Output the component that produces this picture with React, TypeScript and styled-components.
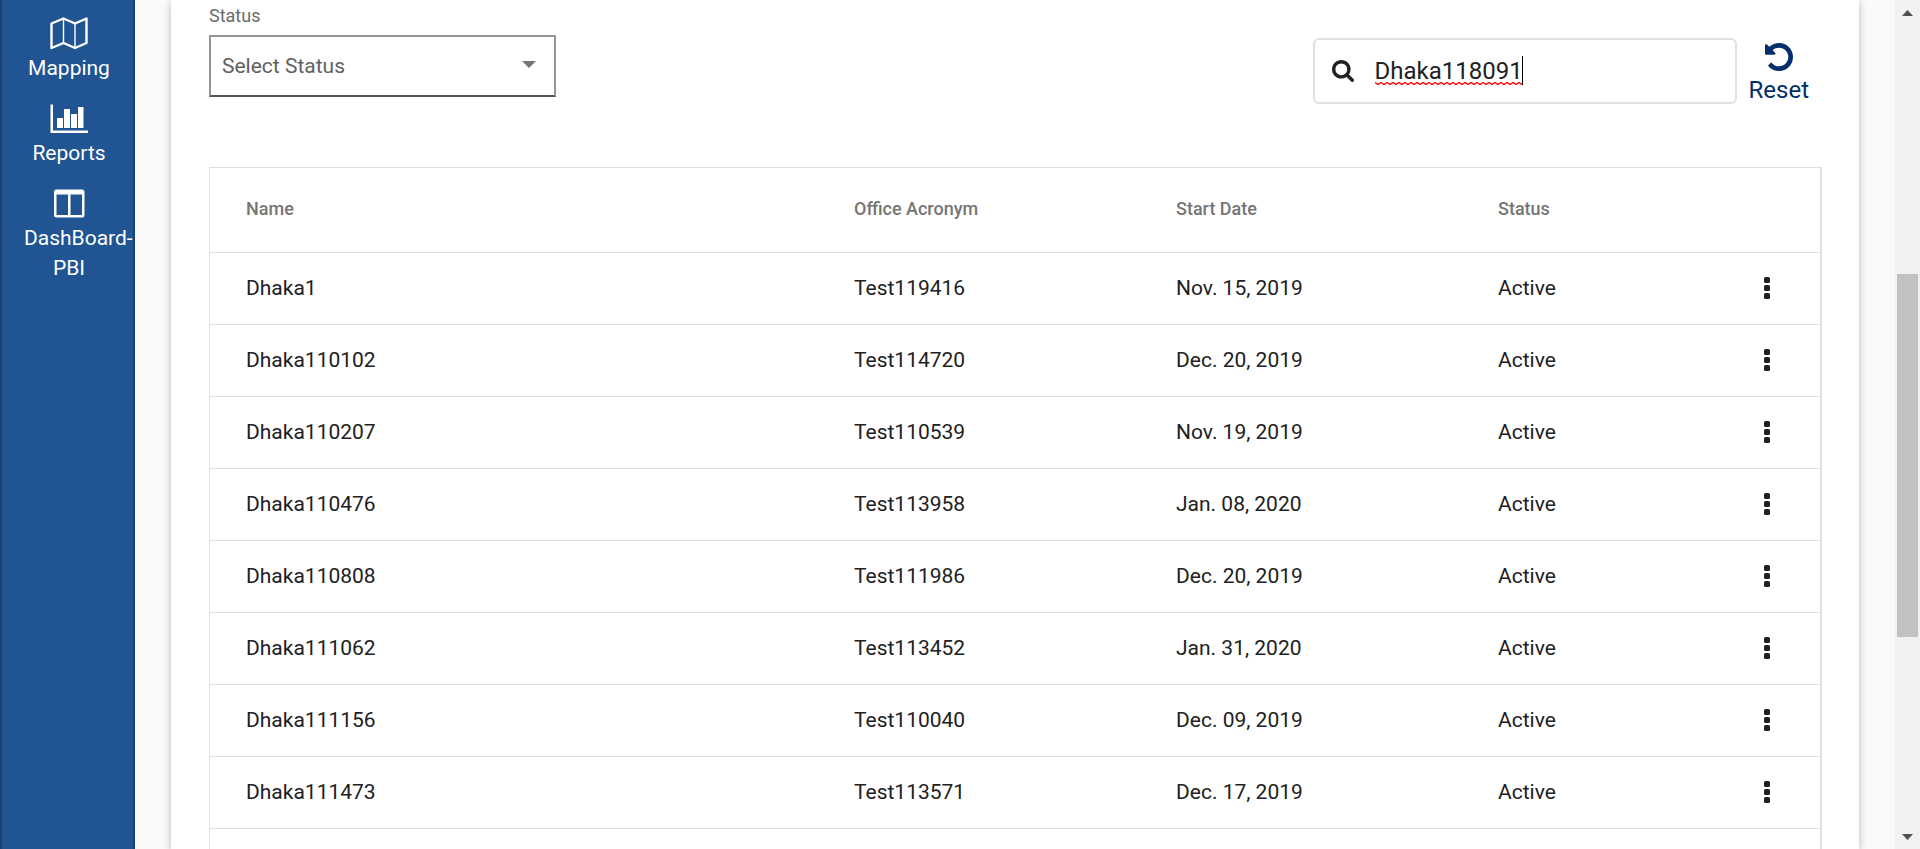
import React from 'react';
import styled, { createGlobalStyle } from 'styled-components';

const GlobalStyle = createGlobalStyle`
  *, *::before, *::after { box-sizing: border-box; }
  body {
    margin: 0;
    background: #fafafa;
    color: #212121;
    font-family: Roboto, "Liberation Sans", sans-serif;
    font-size: 21px;
    line-height: 30px;
  }
  button, input, select { font: inherit; color: inherit; }
`;

const Page = styled.div`
  display: flex;
  height: 100vh;
  overflow: hidden;
`;

const Sidebar = styled.nav`
  flex: none;
  width: 135px;
  padding: 16px 19px 0 22px;
  background: #205493;
  border: solid #1a4171;
  border-width: 0 2px;
`;

const NavList = styled.ul`
  list-style: none;
  margin: 0;
  padding: 0;
  display: flex;
  flex-direction: column;
  gap: 18px;
`;

const NavLink = styled.a`
  display: flex;
  flex-direction: column;
  gap: 3px;
  color: #fff;
  text-align: center;
  text-decoration: none;
  svg { display: block; margin: 0 auto; }
`;

const Main = styled.main`
  flex: 1;
  min-width: 0;
  display: flex;
  padding: 0 36px;
`;

const Card = styled.section`
  flex: 1;
  min-width: 0;
  display: flex;
  flex-direction: column;
  padding: 0 37px 0 38px;
  background: #fff;
  box-shadow: 0 2px 8px rgba(0, 0, 0, 0.26);
`;

const Filters = styled.div`
  display: flex;
  justify-content: space-between;
  align-items: flex-start;
`;

const StatusField = styled.div`
  width: 347px;
`;

const StatusLabel = styled.label`
  display: block;
  height: 35px;
  color: #6b6b6b;
  font-size: 18px;
  line-height: 32px;
`;

const SelectBox = styled.div`
  position: relative;
  height: 62px;
  svg {
    position: absolute;
    right: 20px;
    top: 26px;
    pointer-events: none;
  }
`;

const Select = styled.select`
  appearance: none;
  width: 100%;
  height: 100%;
  padding: 0 48px 0 11px;
  border: 2px solid #969696;
  border-bottom-color: #565656;
  border-radius: 0;
  background: #fff;
  color: #616161;
`;

const SearchGroup = styled.div`
  display: flex;
  align-items: flex-start;
  gap: 12px;
  padding: 38px 13px 0 0;
`;

const SearchBox = styled.div`
  display: flex;
  align-items: center;
  gap: 21px;
  width: 424px;
  height: 66px;
  padding: 0 17px;
  border: 2px solid #e0e0e0;
  border-radius: 6px;
`;

const SearchEntry = styled.div`
  position: relative;
  flex: 1;
`;

const SearchInput = styled.input`
  display: block;
  width: 100%;
  padding: 0;
  border: 0;
  outline: 0;
  background: transparent;
  font-size: 24px;
  caret-color: transparent;
`;

const Squiggle = styled.svg`
  position: absolute;
  left: 0;
  bottom: 1px;
`;

const Caret = styled.span`
  position: absolute;
  left: 147px;
  top: 0;
  width: 1px;
  height: 29px;
  background: #000;
`;

const ResetButton = styled.button`
  display: flex;
  flex-direction: column;
  align-items: center;
  gap: 4px;
  padding: 5px 0 0;
  border: 0;
  background: none;
  color: #002f6c;
  font-size: 24px;
`;

const TableFrame = styled.div`
  flex: 1;
  margin-top: 62px;
  border: 1px solid #e0e0e0;
  border-right-width: 2px;
  border-bottom: 0;
`;

const Table = styled.table`
  width: 100%;
  table-layout: fixed;
  border-collapse: separate;
  border-spacing: 0;
  text-align: left;
  th, td {
    padding: 0 0 2px;
    border-bottom: 1px solid #e0e0e0;
  }
  th:first-child, td:first-child { padding-left: 36px; }
`;

const HeadCell = styled.th<{ $width: string }>`
  width: ${(p) => p.$width};
  height: 85px;
  color: #757575;
  font-size: 18px;
  font-weight: 500;
`;

const Cell = styled.td`
  height: 72px;
`;

const MenuButton = styled.button`
  display: block;
  margin: 0 50px 0 auto;
  padding: 0;
  border: 0;
  background: none;
  svg { display: block; }
`;

const Scrollbar = styled.div`
  flex: none;
  width: 25px;
  display: flex;
  flex-direction: column;
  background: #f1f1f1;
`;

const ScrollArrow = styled.div`
  display: grid;
  place-items: center;
  height: 25px;
`;

const ScrollTrack = styled.div<{ $share: number }>`
  flex: ${(p) => p.$share} 0 0;
`;

const ScrollThumb = styled(ScrollTrack)`
  margin: 0 2px;
  background: #c1c1c1;
`;

const MapIcon = () => (
  <svg width="38" height="34" viewBox="0 0 38 34" fill="none" stroke="#fff">
    <path d="M1.5 7.5 13.5 2.5 25 7.5 36.5 2.5V27L25 32 13.5 27 1.5 32Z" strokeWidth="2.4" strokeLinejoin="round" />
    <path d="M13.5 2.5V27M25 7.5V32" strokeWidth="1.4" />
  </svg>
);

const ChartIcon = () => (
  <svg width="38" height="34" viewBox="0 0 38 34" fill="#fff">
    <path d="M0.5 3.5H3V29.500H38V32H0.500Z" />
    <path d="M7 17h6v10H7ZM14 8h6v19h-6ZM21 13h6v14h-6ZM28 6h5.500v21H28Z" />
  </svg>
);

const ColumnsIcon = () => (
  <svg width="38" height="34" viewBox="0 0 38 34">
    <path
      fill="#fff"
      fillRule="evenodd"
      d="M6.5 3.5h25.500q2.500 0 2.500 2.500v23q0 2.500-2.500 2.500H6.500q-2.500 0-2.500-2.500V6q0-2.500 2.500-2.500ZM6.500 8.500V28.500q0 .5.5.5H18V8.500ZM20.500 8.500V29H31.500q.5 0 .5-.5V8.500Z"
    />
  </svg>
);

const SearchIcon = () => (
  <svg width="22" height="22" viewBox="64 128 1664 1664" fill="#212121">
    <path d="M1216 832q0-185-131.5-316.5t-316.5-131.5-316.5 131.5-131.5 316.5 131.5 316.5 316.5 131.5 316.5-131.5 131.5-316.5zm512 832q0 52-38 90t-90 38q-54 0-90-38l-343-342q-179 124-399 124-143 0-273.5-55.5t-225-150-150-225-55.5-273.5 55.5-273.5 150-225 225-150 273.5-55.5 273.5 55.5 225 150 150 225 55.5 273.5q0 220-124 399l343 343q37 37 37 90z" />
  </svg>
);

const UndoIcon = () => (
  <svg width="28" height="28" viewBox="128 128 1536 1536" fill="currentColor">
    <path d="M1664 896q0 156-61 298t-164 245-245 164-298 61q-172 0-327-72.5t-264-204.5q-7-10-6.5-22.5t8.5-20.5l137-138q10-9 25-9 16 2 23 12 73 95 179 147t225 52q104 0 198.5-40.5t163.5-109.5 109.5-163.5 40.5-198.5-40.5-198.5-109.5-163.5-163.5-109.5-198.5-40.5q-98 0-188 35.5t-160 101.5l137 138q31 30 14 69-17 40-59 40h-448q-26 0-45-19t-19-45v-448q0-42 40-59 39-17 69 14l130 129q107-101 244.5-156.5t284.5-55.5q156 0 298 61t245 164 164 245 61 298z" />
  </svg>
);

const DotsIcon = () => (
  <svg width="6" height="22" viewBox="0 0 6 22" fill="#212121">
    {[0, 8, 16].map((y) => (
      <rect key={y} y={y} width="6" height="6" rx="1.5" />
    ))}
  </svg>
);

const navItems = [
  { label: 'Mapping', Icon: MapIcon },
  { label: 'Reports', Icon: ChartIcon },
  { label: 'DashBoard-PBI', Icon: ColumnsIcon },
];

const columns = [
  { label: 'Name', width: '40%' },
  { label: 'Office Acronym', width: '20%' },
  { label: 'Start Date', width: '20%' },
  { label: 'Status', width: '12%' },
];

const offices = [
  ['Dhaka1', 'Test119416', 'Nov. 15, 2019'],
  ['Dhaka110102', 'Test114720', 'Dec. 20, 2019'],
  ['Dhaka110207', 'Test110539', 'Nov. 19, 2019'],
  ['Dhaka110476', 'Test113958', 'Jan. 08, 2020'],
  ['Dhaka110808', 'Test111986', 'Dec. 20, 2019'],
  ['Dhaka111062', 'Test113452', 'Jan. 31, 2020'],
  ['Dhaka111156', 'Test110040', 'Dec. 09, 2019'],
  ['Dhaka111473', 'Test113571', 'Dec. 17, 2019'],
];

export default function App() {
  const [query, setQuery] = React.useState('Dhaka118091');

  return (
    <>
      <GlobalStyle />
      <Page>
        <Sidebar>
          <NavList>
            {navItems.map(({ label, Icon }) => (
              <li key={label}>
                <NavLink href="#">
                  <Icon />
                  <span>{label}</span>
                </NavLink>
              </li>
            ))}
          </NavList>
        </Sidebar>

        <Main>
          <Card>
            <Filters>
              <StatusField>
                <StatusLabel htmlFor="status">Status</StatusLabel>
                <SelectBox>
                  <Select id="status">
                    <option>Select Status</option>
                  </Select>
                  <svg width="14" height="7" viewBox="0 0 14 7" fill="#757575">
                    <path d="M0 0h14L7 7Z" />
                  </svg>
                </SelectBox>
              </StatusField>

              <SearchGroup>
                <SearchBox>
                  <SearchIcon />
                  <SearchEntry>
                    <SearchInput
                      aria-label="Search"
                      spellCheck={false}
                      value={query}
                      onChange={(e) => setQuery(e.target.value)}
                    />
                    <Squiggle width="147" height="3" aria-hidden="true">
                      <defs>
                        <pattern id="wave" width="6" height="3" patternUnits="userSpaceOnUse">
                          <path d="M-3 2.5 0 0.5 3 2.5 6 0.5 9 2.5" fill="none" stroke="#f00" strokeWidth="1.4" />
                        </pattern>
                      </defs>
                      <rect width="147" height="3" fill="url(#wave)" />
                    </Squiggle>
                    <Caret />
                  </SearchEntry>
                </SearchBox>
                <ResetButton type="button" onClick={() => setQuery('')}>
                  <UndoIcon />
                  Reset
                </ResetButton>
              </SearchGroup>
            </Filters>

            <TableFrame>
              <Table>
                <thead>
                  <tr>
                    {columns.map((c) => (
                      <HeadCell key={c.label} $width={c.width}>{c.label}</HeadCell>
                    ))}
                    <HeadCell as="td" $width="8%" />
                  </tr>
                </thead>
                <tbody>
                  {offices.map(([name, acronym, start]) => (
                    <tr key={name}>
                      <Cell>{name}</Cell>
                      <Cell>{acronym}</Cell>
                      <Cell>{start}</Cell>
                      <Cell>Active</Cell>
                      <Cell>
                        <MenuButton type="button" aria-label="Row actions">
                          <DotsIcon />
                        </MenuButton>
                      </Cell>
                    </tr>
                  ))}
                </tbody>
              </Table>
            </TableFrame>
          </Card>
        </Main>

        <Scrollbar aria-hidden="true">
          <ScrollArrow>
            <svg width="11" height="6" viewBox="0 0 11 6" fill="#505050"><path d="M0 6h11L5.5 0Z" /></svg>
          </ScrollArrow>
          <ScrollTrack $share={249} />
          <ScrollThumb $share={363} />
          <ScrollTrack $share={187} />
          <ScrollArrow>
            <svg width="11" height="6" viewBox="0 0 11 6" fill="#505050"><path d="M0 0h11L5.5 6Z" /></svg>
          </ScrollArrow>
        </Scrollbar>
      </Page>
    </>
  );
}
